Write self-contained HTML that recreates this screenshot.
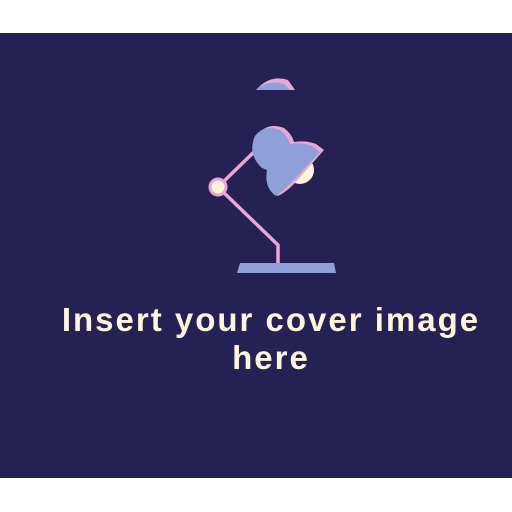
<!DOCTYPE html>
<html><head><style>
html,body{margin:0;padding:0;background:#fff;}
body{width:512px;height:512px;position:relative;overflow:hidden;}
.bg{position:absolute;left:0;top:33px;width:512px;height:445px;background:#252154;}
.t{position:absolute;left:21px;width:500px;top:301px;text-align:center;color:#fdf5dc;font-family:"Liberation Sans",sans-serif;font-weight:bold;font-size:33px;line-height:38px;letter-spacing:2px;}
svg{position:absolute;left:0;top:0;}
</style></head><body>
<div class="bg"></div>
<svg width="512" height="512" viewBox="0 0 512 512">
  <path d="M256 90 Q270 74 288 80 L295 90 Z" fill="#e9a9d6"/>
  <path d="M256 90 Q268 79 284 84 L290 90 Z" fill="#8f9fd8"/>
  <g stroke="#eaa6d4" stroke-width="3.5" fill="none" stroke-linecap="round">
    <line x1="218" y1="187" x2="258" y2="148"/>
    <polyline points="218,187 278,245 278,265"/>
  </g>
  <circle cx="218" cy="187" r="8" fill="#fdf3d8" stroke="#eaa6d4" stroke-width="3"/>
  <circle cx="300" cy="170" r="14" fill="#fdf6d8"/>
  <path d="M258 134 Q268 122 284 128 Q292 134 294 142 Q306 140 316 144 L324 150 L294 184 Q286 192 278 196 Q266 188 270 170 L265 168 Q250 152 258 134 Z" fill="#eaa6d4"/>
  <path d="M255 136 Q264 124 280 130 Q288 136 290 144 Q302 142 312 146 L320 152 L290 184 Q282 192 276 196 Q264 188 267 170 L262 168 Q247 154 255 136 Z" fill="#8f9fd8"/>
  <path d="M240 263 L334 263 L336 273 L237 273 Z" fill="#8f9fd8"/>
</svg>
<div class="t">Insert your cover image<br>here</div>
</body></html>
